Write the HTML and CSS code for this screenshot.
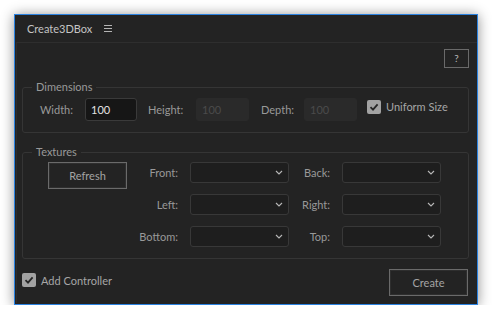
FILE: index.html
```html
<!DOCTYPE html>
<html>
<head>
<meta charset="utf-8">
<link rel="stylesheet" href="styles.css">
</head>
<body>
<div class="panel">
  <div class="header">
    <span class="title">Create3DBox</span>
    <svg class="menu" width="8" height="8" viewBox="0 0 8 8"><path d="M0 0.5H8M0 3.5H8M0 6.5H8" stroke="#b4b4b4" stroke-width="1"/></svg>
  </div>
  <div class="content">
    <div class="help-row"><button class="help">?</button></div>

    <div class="group dims">
      <div class="group-title">Dimensions</div>
      <div class="dim-row">
        <span class="lbl l-width">Width:</span>
        <div class="field active">100</div>
        <span class="lbl l-height">Height:</span>
        <div class="field disabled w53">100</div>
        <span class="lbl l-depth">Depth:</span>
        <div class="field disabled w53">100</div>
        <label class="check uniform">
          <span class="box"><svg width="14" height="14" viewBox="0 0 14 14"><path d="M3.5 7.2L6 9.6L10.6 4.4" fill="none" stroke="#262626" stroke-width="1.8"/></svg></span>
          <span>Uniform Size</span>
        </label>
      </div>
    </div>

    <div class="group textures">
      <div class="group-title">Textures</div>
      <div class="tex-grid">
        <button class="btn refresh">Refresh</button>
        <span class="tlbl">Front:</span>
        <div class="select"><svg class="chev" width="8" height="5" viewBox="0 0 8 5"><path d="M1 1L4 4L7 1" fill="none" stroke="#b8b8b8" stroke-width="1.1"/></svg></div>
        <span class="tlbl">Back:</span>
        <div class="select"><svg class="chev" width="8" height="5" viewBox="0 0 8 5"><path d="M1 1L4 4L7 1" fill="none" stroke="#b8b8b8" stroke-width="1.1"/></svg></div>

        <span class="tlbl c2">Left:</span>
        <div class="select"><svg class="chev" width="8" height="5" viewBox="0 0 8 5"><path d="M1 1L4 4L7 1" fill="none" stroke="#b8b8b8" stroke-width="1.1"/></svg></div>
        <span class="tlbl">Right:</span>
        <div class="select"><svg class="chev" width="8" height="5" viewBox="0 0 8 5"><path d="M1 1L4 4L7 1" fill="none" stroke="#b8b8b8" stroke-width="1.1"/></svg></div>

        <span class="tlbl c2">Bottom:</span>
        <div class="select"><svg class="chev" width="8" height="5" viewBox="0 0 8 5"><path d="M1 1L4 4L7 1" fill="none" stroke="#b8b8b8" stroke-width="1.1"/></svg></div>
        <span class="tlbl">Top:</span>
        <div class="select"><svg class="chev" width="8" height="5" viewBox="0 0 8 5"><path d="M1 1L4 4L7 1" fill="none" stroke="#b8b8b8" stroke-width="1.1"/></svg></div>
      </div>
    </div>

    <div class="footer">
      <label class="check">
        <span class="box"><svg width="14" height="14" viewBox="0 0 14 14"><path d="M3.5 7.2L6 9.6L10.6 4.4" fill="none" stroke="#262626" stroke-width="1.8"/></svg></span>
        <span>Add Controller</span>
      </label>
      <button class="btn create">Create</button>
    </div>
  </div>
</div>
</body>
</html>
```

FILE: styles.css
```css
* { box-sizing: border-box; }
html, body { margin: 0; padding: 0; background: #ffffff; }
body {
  font-family: "Lato", "Open Sans", sans-serif;
  font-size: 11px;
  color: #a0a0a0;
}
.panel {
  margin: 14px 0 0 14px;
  width: 464px;
  height: 291px;
  background: #232323;
  border: 1px solid #2b82e0;
  box-shadow: 0 1px 12px rgba(0,0,0,0.45);
  display: flex;
  flex-direction: column;
}
.header {
  height: 27px;
  display: flex;
  align-items: center;
  padding-left: 12px;
}
.title {
  color: #c4c4c4;
  font-size: 11px;
}
.menu { margin-left: 12px; margin-top: 1px; }
.content {
  flex: 1;
  margin: 0 0 1px 1px;
  border-top: 1px solid #2e2e2e;
  border-left: 1px solid #2c2c2c;
  padding: 6px 8px 0 5px;
  display: flex;
  flex-direction: column;
}
.help-row { display: flex; justify-content: flex-end; }
.help {
  width: 25px;
  height: 19px;
  background: transparent;
  border: 1px solid #6a6a6a;
  color: #b8b8b8;
  font-family: inherit;
  font-size: 10px;
  padding: 0;
  line-height: 17px;
}
.group {
  border: 1px solid #353535;
  border-radius: 3px;
}
.group-title {
  width: fit-content;
  padding: 0 4px;
  background: #232323;
  line-height: 14px;
  color: #999999;
  font-size: 11px;
}
.dims { margin-top: 19px; padding: 0 0 11px 17px; }
.dims .group-title { margin: -8px 0 0 -8px; }
.dim-row {
  margin-top: 4px;
  display: flex;
  align-items: center;
  height: 23px;
}
.lbl { font-size: 11px; color: #999999; }
.l-width { width: 45px; }
.l-height { width: 48px; margin-left: 11px; }
.l-depth { width: 43px; margin-left: 12px; }
.field {
  width: 52px;
  height: 23px;
  border-radius: 3px;
  padding-left: 5px;
  line-height: 21px;
  font-size: 11px;
}
.w53 { width: 53px; }
.field.active {
  background: #161616;
  border: 1px solid #3a3a3a;
  color: #e2e2e2;
}
.field.disabled {
  background: #2a2a2a;
  border: 1px solid #2a2a2a;
  color: #4a4a4a;
}
.check {
  display: flex;
  align-items: center;
  color: #a6a6a6;
  font-size: 11px;
}
.uniform { margin-left: 10px; margin-bottom: 6px; }
.box {
  width: 14px;
  height: 14px;
  border-radius: 2px;
  background: #a2a2a2;
  margin-right: 5px;
  display: block;
}
.box svg { display: block; }
.textures { margin-top: 19px; padding: 0 0 11px 25px; }
.textures .group-title { margin: -8px 0 0 -16px; }
.tex-grid {
  margin-top: 3px;
  display: grid;
  grid-template-columns: 79px 63px 99px 53px 99px;
  grid-template-rows: 21px 21px 21px;
  row-gap: 11px;
  align-items: center;
}
.tlbl {
  text-align: right;
  padding-right: 12px;
  font-size: 11px;
  color: #999999;
}
.c2 { grid-column: 2; }
.select {
  height: 21px;
  background: #1e1e1e;
  border: 1px solid #383838;
  border-radius: 3px;
  display: flex;
  align-items: center;
  justify-content: flex-end;
  padding-right: 5px;
}
.chev { display: block; }
.btn {
  background: transparent;
  border: 1px solid #6a6a6a;
  box-shadow: inset 0 0 0 1px #2e2e2e;
  color: #a4a4a4;
  font-family: inherit;
  font-size: 11px;
  padding: 0;
  width: 79px;
  height: 27px;
}
.refresh { grid-row: 1 / span 2; grid-column: 1; align-self: start; }
.footer {
  margin-top: 10px;
  display: flex;
  justify-content: space-between;
  align-items: center;
}
.footer .check { margin-top: -5px; }
.create { margin-right: 1px; }
```
